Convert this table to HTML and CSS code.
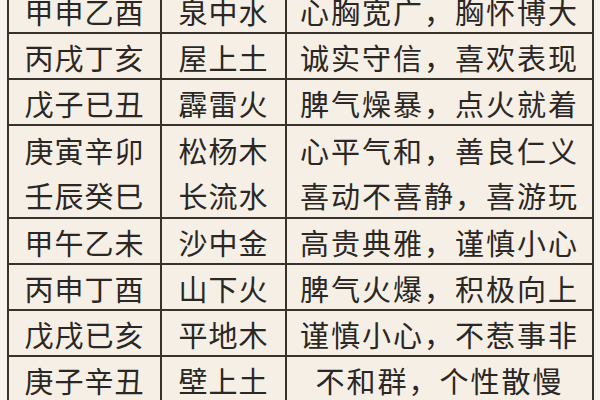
FILE: index.html
```html
<!DOCTYPE html>
<html lang="zh-CN">
<head>
<meta charset="utf-8">
<title>纳音五行表</title>
<link rel="stylesheet" href="styles.css">
</head>
<body>
<div class="table">
  <div class="cell c1">甲申乙酉</div><div class="cell c2">泉中水</div><div class="cell c3">心胸宽广，胸怀博大</div>
  <div class="cell c1">丙戌丁亥</div><div class="cell c2">屋上土</div><div class="cell c3">诚实守信，喜欢表现</div>
  <div class="cell c1">戊子已丑</div><div class="cell c2">霹雷火</div><div class="cell c3">脾气燥暴，点火就着</div>
  <div class="cell c1 tall">庚寅辛卯<br>壬辰癸巳</div><div class="cell c2 tall">松杨木<br>长流水</div><div class="cell c3 tall">心平气和，善良仁义<br>喜动不喜静，喜游玩</div>
  <div class="cell c1">甲午乙未</div><div class="cell c2">沙中金</div><div class="cell c3">高贵典雅，谨慎小心</div>
  <div class="cell c1">丙申丁酉</div><div class="cell c2">山下火</div><div class="cell c3">脾气火爆，积极向上</div>
  <div class="cell c1">戊戌已亥</div><div class="cell c2">平地木</div><div class="cell c3">谨慎小心，不惹事非</div>
  <div class="cell c1">庚子辛丑</div><div class="cell c2">壁上土</div><div class="cell c3">不和群，个性散慢</div>
</div>
</body>
</html>
```
FILE: styles.css
```css
html, body {
  margin: 0;
  padding: 0;
  background: #f7f3ed;
  overflow: hidden;
}
body {
  padding-left: 7px;
  height: 400px;
}
.table {
  display: grid;
  grid-template-columns: 153px 125px 307px;
  width: 585px;
  margin-top: -14px;
  border-left: 2px solid #38322c;
  border-top: 2px solid #38322c;
  background: #f5efe6;
  font-family: "Noto Sans CJK SC", "Noto Sans", sans-serif;
  font-size: 29px;
  color: #2a2724;
}
.cell {
  box-sizing: border-box;
  height: 46px;
  border-right: 2px solid #38322c;
  border-bottom: 2px solid #38322c;
  display: flex;
  align-items: center;
  justify-content: center;
  text-align: center;
  line-height: 45px;
  padding-top: 3px;
  white-space: nowrap;
}
.cell.tall {
  height: 93px;
}
.c1 { letter-spacing: 1px; }
.c2 { letter-spacing: 1px; }
.c3 { letter-spacing: 2px; }
```
